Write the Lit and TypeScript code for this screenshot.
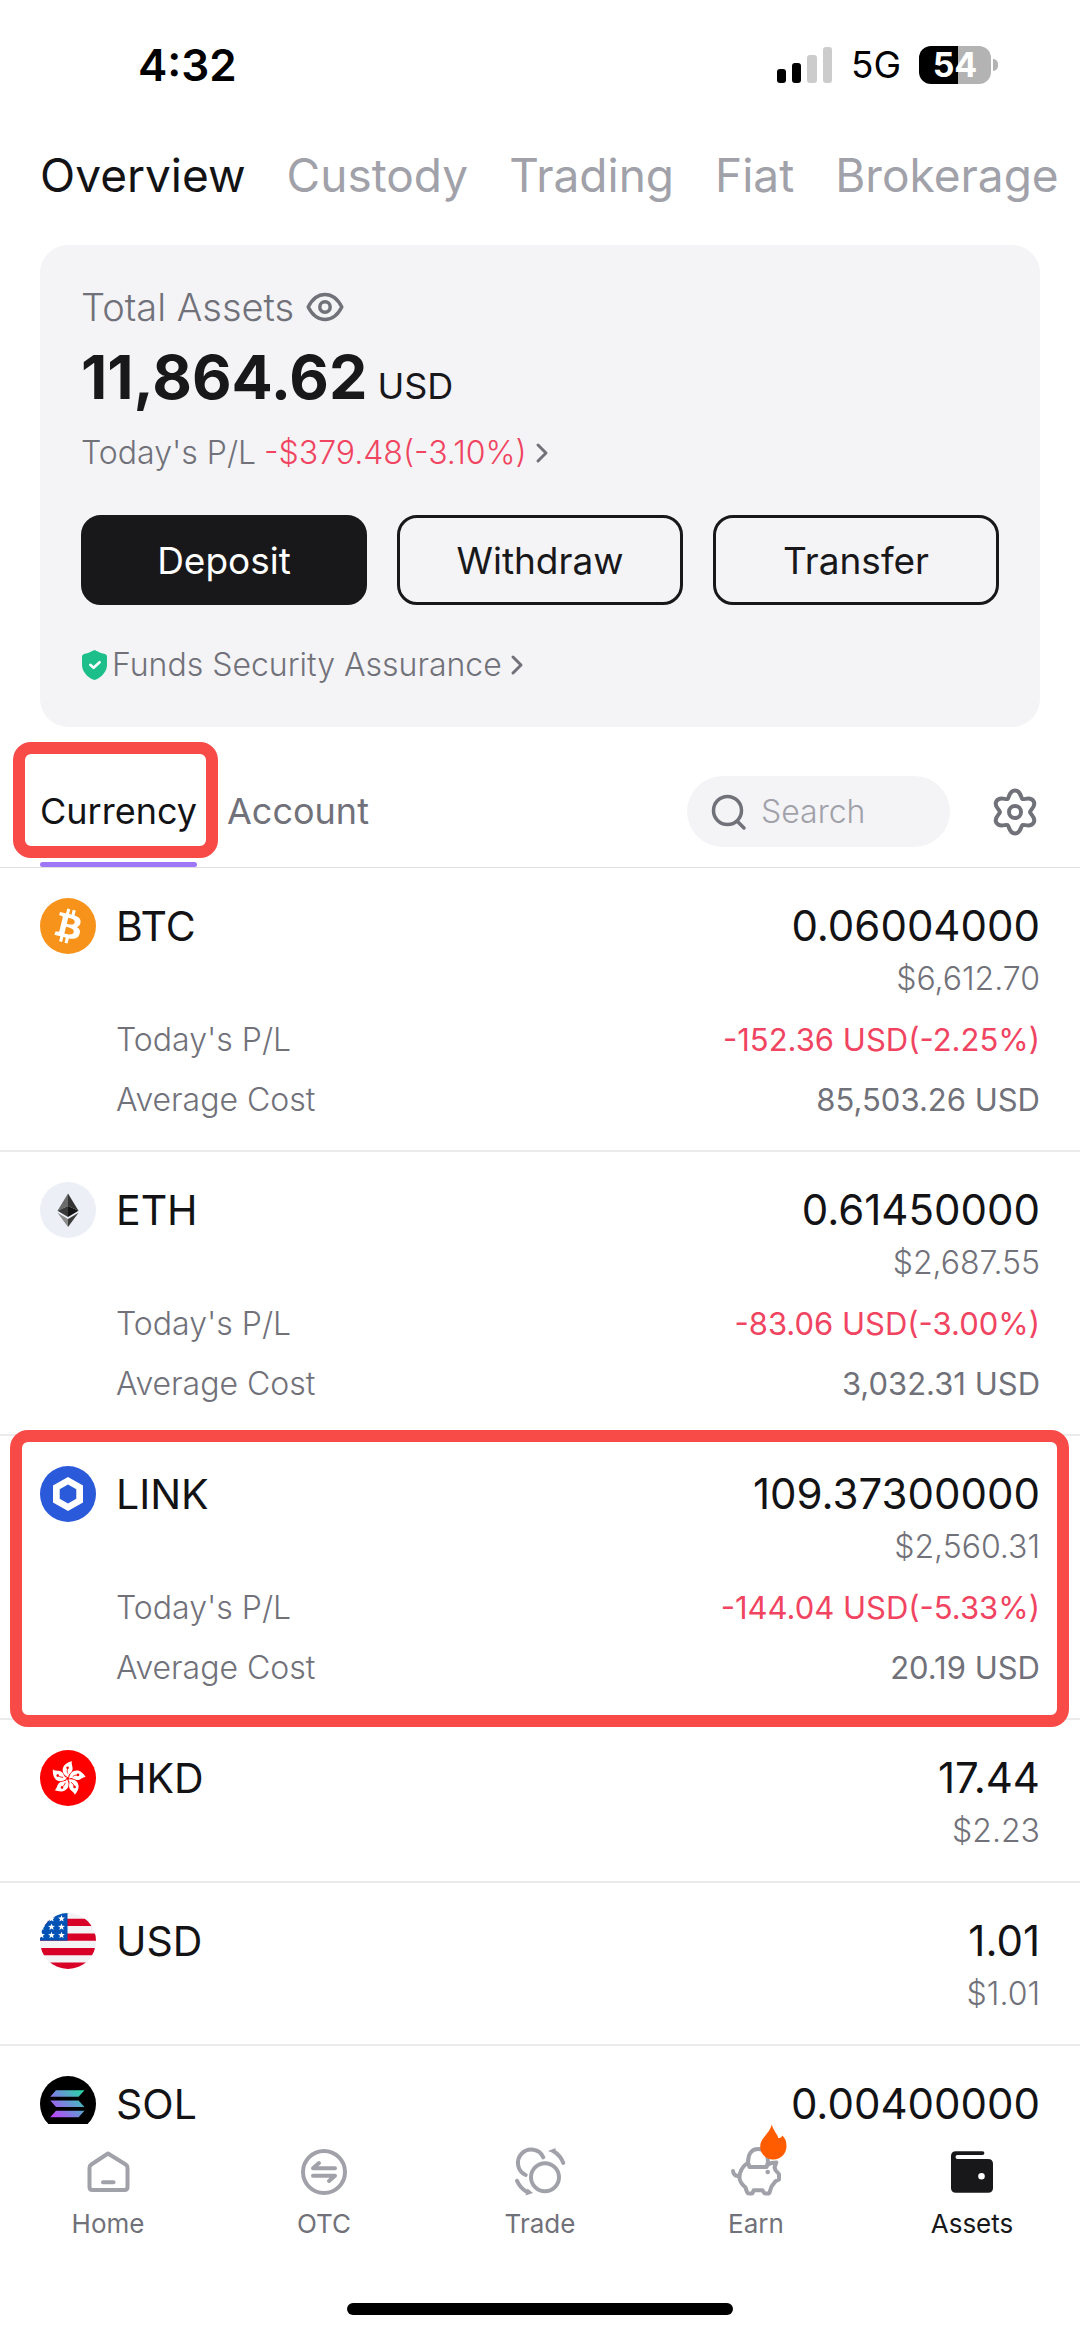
import { LitElement, html, css, svg, nothing, type TemplateResult } from "lit";
import { customElement, property, state } from "lit/decorators.js";
import { classMap } from "lit/directives/class-map.js";

interface Holding {
  code: string;
  amount: string;
  fiat?: string;
  profit?: string;
  cost?: string;
  marked?: boolean;
}

const HOLDINGS: Holding[] = [
  { code: "BTC", amount: "0.06004000", fiat: "$6,612.70", profit: "-152.36 USD(-2.25%)", cost: "85,503.26 USD" },
  { code: "ETH", amount: "0.61450000", fiat: "$2,687.55", profit: "-83.06 USD(-3.00%)", cost: "3,032.31 USD" },
  { code: "LINK", amount: "109.37300000", fiat: "$2,560.31", profit: "-144.04 USD(-5.33%)", cost: "20.19 USD", marked: true },
  { code: "HKD", amount: "17.44", fiat: "$2.23" },
  { code: "USD", amount: "1.01", fiat: "$1.01" },
  { code: "SOL", amount: "0.00400000" },
];

const SECTIONS = ["Overview", "Custody", "Trading", "Fiat", "Brokerage"];
const NAV = ["Home", "OTC", "Trade", "Earn", "Assets"];

const star = (cx: number, cy: number, r: number) =>
  Array.from({ length: 10 }, (_, i) => {
    const a = (Math.PI / 5) * i - Math.PI / 2;
    const d = i % 2 ? r * 0.42 : r;
    return `${(cx + d * Math.cos(a)).toFixed(2)},${(cy + d * Math.sin(a)).toFixed(2)}`;
  }).join(" ");

/* Six rounded lobes around the origin. */
const gearPath = () => {
  const at = (i: number) => {
    const a = (Math.PI / 6) * i - Math.PI / 2;
    const lobe = i % 2 === 0;
    const r = lobe ? 21.5 : 15;
    const h = lobe ? 6 : 2;
    const x = r * Math.cos(a);
    const y = r * Math.sin(a);
    const tx = -Math.sin(a) * h;
    const ty = Math.cos(a) * h;
    return { x, y, tx, ty };
  };
  const first = at(0);
  let d = `M${first.x.toFixed(2)} ${first.y.toFixed(2)}`;
  for (let i = 0; i < 12; i++) {
    const p = at(i);
    const q = at(i + 1);
    d += `C${(p.x + p.tx).toFixed(2)} ${(p.y + p.ty).toFixed(2)} ${(q.x - q.tx).toFixed(2)} ${(q.y - q.ty).toFixed(2)} ${q.x.toFixed(2)} ${q.y.toFixed(2)}`;
  }
  return d + "Z";
};

const COIN_ART: Record<string, TemplateResult> = {
  BTC: svg`<g transform="scale(1.75)"><circle cx="16" cy="16" r="16" fill="#f7931a"/><path fill="#fff" d="M23.189 14.02c.314-2.096-1.283-3.223-3.465-3.975l.708-2.84-1.728-.43-.69 2.765c-.454-.114-.92-.22-1.385-.326l.695-2.783L15.596 6l-.708 2.839c-.376-.086-.746-.17-1.104-.26l.002-.009-2.384-.595-.46 1.846s1.283.294 1.256.312c.7.175.826.638.805 1.006l-.806 3.235c.048.012.11.03.18.057l-.183-.045-1.13 4.532c-.086.212-.303.531-.793.41.018.025-1.256-.313-1.256-.313l-.858 1.978 2.25.561c.418.105.828.215 1.231.318l-.715 2.872 1.727.43.708-2.84c.472.127.93.245 1.378.357l-.706 2.828 1.728.43.715-2.866c2.948.558 5.164.333 6.097-2.333.752-2.146-.037-3.385-1.588-4.192 1.13-.26 1.98-1.003 2.207-2.538zm-3.95 5.538c-.533 2.147-4.148.986-5.32.695l.95-3.805c1.172.293 4.929.872 4.37 3.11zm.535-5.569c-.487 1.953-3.495.96-4.47.717l.86-3.45c.975.243 4.118.696 3.61 2.733z"/></g>`,
  ETH: svg`<circle cx="28" cy="28" r="28" fill="#ecf0f6"/>
    <path fill="#6b6b6b" d="M28 11.5V24l-10.5 4.8z"/><path fill="#343434" d="M28 11.5V24l10.5 4.8z"/>
    <path fill="#393939" d="M28 24v11l-10.500-6.200z"/><path fill="#141414" d="M28 24v11l10.500-6.200z"/>
    <path fill="#8c8c8c" d="M17.500 30.800L28 37v8z"/><path fill="#3c3c3b" d="M38.500 30.800L28 37v8z"/>`,
  LINK: svg`<circle cx="28" cy="28" r="28" fill="#2a5ada"/><path fill="#fff" fill-rule="evenodd" d="M28 11l15 8.500v17L28 45l-15-8.500v-17zM28 18.500l-8.300 4.700v9.600l8.300 4.700 8.300-4.700v-9.600z"/>`,
  HKD: svg`<circle cx="28" cy="28" r="28" fill="#fe0000"/>${[0, 72, 144, 216, 288].map(
    (a) => svg`<g transform="rotate(${a} 28 28.500)"><path fill="#fff" d="M28.600 27.500C20.500 24.500 20 14 32 11.300c-1.200 3 1.600 5.700.3 9.200-1.300 3.200-4.600 3.500-3.700 7z"/><path d="M27.800 23.500c-.8-1.500-.8-3-.2-4.600" fill="none" stroke="#fe0000" stroke-width="0.8"/><circle cx="27.600" cy="17.800" r="1.300" fill="#fe0000"/></g>`,
  )}`,
  USD: svg`<defs><clipPath id="disc"><circle cx="28" cy="28" r="28"/></clipPath></defs>
    <g clip-path="url(#disc)"><rect width="56" height="56" fill="#f3f3f5"/>
    <path fill="#d80027" d="M0 5.800h56v7.300H0zM0 20.400h56v7.300H0zM0 35h56v7.300H0zM0 49.600h56V56H0z"/>
    <rect width="27.500" height="27.600" fill="#0052b4"/></g>
    ${[[21.5, 5.700], [11.5, 5.700], [11.5, 14], [21.5, 14], [1.500, 14], [1.500, 22.300], [11.5, 22.300], [21.5, 22.300]].map(
      ([x, y]) => svg`<polygon fill="#fff" points=${star(x, y, 3.600)}/>`,
    )}`,
  SOL: svg`<defs><linearGradient id="sol" gradientUnits="userSpaceOnUse" x1="12" y1="43" x2="43" y2="12"><stop offset="0" stop-color="#c63cff"/><stop offset="0.5" stop-color="#6d8fd8"/><stop offset="1" stop-color="#1fe0a0"/></linearGradient></defs>
    <circle cx="28" cy="28" r="28" fill="#000"/><path fill="url(#sol)" d="M16 14.300h28.500L38.600 20.800H10.200zM10.200 24.600h28.400l5.900 6.500H16zM16 34.800h28.500l-5.900 6.500H10.200z"/>`,
};

const NAV_ART: Record<string, TemplateResult> = {
  Home: svg`<path d="M27 8.500L44.700 19.500Q46.500 20.700 46.500 23V42q0 3-3 3H11.500q-3 0-3-3V23q0-2.300 1.800-3.500z"/><path d="M22 37.300h10.500"/>`,
  OTC: svg`<circle cx="27" cy="27" r="21"/><path d="M38 23.200H16L22 18M16 30.800H38L32 36"/>`,
  Trade: svg`<circle cx="32" cy="32.300" r="14"/><path d="M30.300 12.300A13.300 13.300 0 1 0 12.700 30"/><path d="M41 6.500Q47.500 10.500 50.300 18M4 35.800Q7 43 14 47"/><path stroke="none" fill="currentColor" d="M35 6L42.500 3v6zM20 48L12.500 50.500 14.500 43.500z"/>`,
  Earn: svg`<path d="M19 17.500C13.500 21.500 10.500 27 10.500 32.500C10.500 37 13 39.500 16.500 42.500L18 47Q18.700 48.700 20.500 48.500H22Q23.500 48.500 24 47L24.700 45.300H33.500L34.500 47Q35.200 48.500 36.500 48.500H38.500Q40.200 48.500 40.700 47L42.500 41.500L46.500 36.300L50 34.500V29L46.700 25.500L45.500 22.500L47.300 17.500Q42 17.500 39 19.500"/><path d="M20.500 22H37.500L39 17.500C39 9.500 36 4 29 4C22.500 4 19 9 19 17.500z"/><path d="M4 26Q4.500 31 9.500 31"/><circle cx="38.700" cy="27" r="2.300" fill="currentColor" stroke="none"/><path stroke="none" fill="#ff5c00" d="M42.700-20.500C44.500-14 48.500-11 49.200-7Q52.500-6.500 53.200-9.500C56-7 57.500-4 57.500 1C57.500 9 51.500 14.500 44.500 14.500C37 14.500 31.200 9 31.200 1.500C31.200-7 40.500-11 42.700-20.500z"/>`,
  Assets: svg`<path stroke="none" fill="currentColor" fill-rule="evenodd" d="M11 6.200H37.500a1.800 1.800 0 0 1 0 3.800H12.500a2 2 0 0 0 0 4H43q5 0 5 5V43q0 4.700-5 4.700H11q-5 0-5-4.700V11q0-4.800 5-4.800zM36.500 28a3.300 3.300 0 1 0 0 6.600 3.300 3.300 0 0 0 0-6.600z"/>`,
};

const chevron = svg`<path d="M3 3l8 8-8 8" fill="none" stroke="currentColor" stroke-width="3" stroke-linecap="round" stroke-linejoin="round"/>`;

@customElement("holding-row")
class HoldingRow extends LitElement {
  @property({ attribute: false }) holding!: Holding;

  static styles = css`
    :host {
      display: block;
      position: relative;
      border-bottom: 2px solid #ebebed;
    }
    .row {
      display: grid;
      grid-template-columns: 56px 1fr auto;
      column-gap: 20px;
      align-items: center;
      padding: 30px 40px 20px;
    }
    .short {
      padding-bottom: 25px;
    }
    .coin {
      display: block;
      width: 56px;
      height: 56px;
    }
    .code,
    .amount {
      line-height: 56px;
      color: #131316;
    }
    .code {
      font-size: 41px;
    }
    .amount {
      font-size: 42px;
      text-align: right;
    }
    .fiat,
    .label,
    .value {
      color: #71717a;
    }
    .fiat,
    .label {
      font-size: 32px;
      font-weight: 300;
    }
    .fiat {
      grid-column: 2 / 4;
      line-height: 50px;
      text-align: right;
    }
    .details {
      grid-column: 2 / 4;
      margin: 6px 0 0;
      line-height: 60px;
    }
    .pair {
      display: flex;
      justify-content: space-between;
    }
    .value {
      margin: 0;
      font-size: 31px;
    }
    .loss {
      color: #f04461;
    }
    .mark {
      position: absolute;
      inset: -6px 11px -9px 10px;
      border: 12px solid #f84b47;
      border-radius: 18px;
      pointer-events: none;
      z-index: 1;
    }
  `;

  render() {
    const h = this.holding;
    return html`
      <div class=${classMap({ row: true, short: !h.profit })}>
        <svg class="coin" viewBox="0 0 56 56" aria-hidden="true">${COIN_ART[h.code]}</svg>
        <span class="code">${h.code}</span>
        <span class="amount">${h.amount}</span>
        ${h.fiat ? html`<span class="fiat">${h.fiat}</span>` : nothing}
        ${h.profit
          ? html`<dl class="details">
              <div class="pair"><dt class="label">Today's P/L</dt><dd class="value loss">${h.profit}</dd></div>
              <div class="pair"><dt class="label">Average Cost</dt><dd class="value">${h.cost}</dd></div>
            </dl>`
          : nothing}
      </div>
      ${h.marked ? html`<div class="mark"></div>` : nothing}
    `;
  }
}

@customElement("app-root")
class AppRoot extends LitElement {
  @state() private section = "Overview";
  @state() private view = "Currency";

  static styles = css`
    :host {
      display: flex;
      flex-direction: column;
      height: 100vh;
      overflow: hidden;
      background: #fff;
      color: #131316;
      font-family: Inter, "Liberation Sans", sans-serif;
    }
    * {
      box-sizing: border-box;
    }
    button {
      font: inherit;
      color: inherit;
      background: none;
      border: 0;
      padding: 0;
      margin: 0;
      cursor: pointer;
    }
    a {
      color: inherit;
      text-decoration: none;
    }
    svg {
      display: block;
      flex: none;
    }
    .status {
      display: flex;
      align-items: center;
      justify-content: space-between;
      padding: 40px 82px 40px 138px;
      line-height: 50px;
      color: #000;
    }
    .time {
      font-size: 44px;
      font-weight: 600;
    }
    .signals {
      display: flex;
      align-items: center;
    }
    .network {
      margin: 0 18px;
      font-size: 37px;
    }
    .battery {
      width: 72px;
      height: 38px;
      border-radius: 12px;
      background: linear-gradient(90deg, #000 54%, #b3b3b3 54%);
      color: #fff;
      font-size: 34px;
      font-weight: 700;
      line-height: 38px;
      text-align: center;
    }
    .knob {
      width: 5px;
      height: 12px;
      margin-left: 2px;
      border-radius: 0 6px 6px 0;
      background: #b3b3b3;
    }
    .sections {
      display: flex;
      gap: 41px;
      padding: 15px 20px 0 40px;
      font-size: 46px;
      line-height: 60px;
      white-space: nowrap;
      color: #a1a1aa;
    }
    .section.on {
      color: #131316;
    }
    .card {
      margin: 40px 40px 0;
      padding: 40px 41px 42px;
      border-radius: 28px;
      background: #f4f4f6;
      color: #71717a;
    }
    .total {
      display: flex;
      align-items: center;
      gap: 12px;
      font-size: 38px;
      font-weight: 300;
      line-height: 44px;
    }
    .balance {
      display: flex;
      align-items: baseline;
      gap: 10px;
      margin-top: 10px;
      color: #18181b;
    }
    .sum {
      font-size: 61px;
      font-weight: 700;
      line-height: 76px;
    }
    .unit {
      font-size: 36px;
      line-height: 44px;
    }
    .line {
      display: flex;
      align-items: center;
      width: fit-content;
      font-size: 32px;
      font-weight: 300;
      line-height: 40px;
    }
    .today {
      gap: 8px;
      margin-top: 18px;
    }
    .loss {
      color: #f04461;
    }
    .actions {
      display: grid;
      grid-template-columns: repeat(3, 1fr);
      gap: 30px;
      margin: 42px 0 40px;
    }
    .action {
      height: 90px;
      border: 3px solid #18181b;
      border-radius: 20px;
      font-size: 37px;
      color: #18181b;
    }
    .action.primary {
      background: #18181b;
      color: #fff;
    }
    .funds {
      gap: 4px;
    }
    .toolbar {
      display: flex;
      align-items: flex-start;
      gap: 30px;
      padding: 49px 40px 0;
      border-bottom: 1px solid #dfdfe2;
    }
    .view {
      position: relative;
      padding-bottom: 20px;
      font-size: 36px;
      line-height: 71px;
      color: #71717a;
    }
    .view.on {
      color: #131316;
    }
    .view.on::after {
      content: "";
      position: absolute;
      inset: auto 0 0 0;
      height: 5px;
      border-radius: 3px;
      background: #9e77f7;
    }
    .mark {
      position: absolute;
      inset: -34px -21px 9px -27px;
      border: 12px solid #f84b47;
      border-radius: 18px;
      pointer-events: none;
    }
    .search {
      display: flex;
      align-items: center;
      gap: 14px;
      width: 263px;
      height: 71px;
      margin-left: auto;
      padding: 0 24px;
      border-radius: 36px;
      background: #f4f4f6;
      color: #71717a;
    }
    .query {
      flex: 1;
      min-width: 0;
      padding: 0;
      border: 0;
      outline: 0;
      background: none;
      font: inherit;
      font-size: 32px;
      font-weight: 300;
      color: #131316;
    }
    .query::placeholder {
      color: #a1a1aa;
      opacity: 1;
    }
    .gear {
      height: 71px;
      margin-left: 10px;
      color: #71717a;
    }
    .list {
      flex: 1;
      min-height: 0;
      overflow: hidden auto;
      scrollbar-width: none;
      margin: 0;
      padding: 0;
      list-style: none;
    }
    .nav {
      position: relative;
      z-index: 2;
      display: grid;
      grid-template-columns: repeat(5, 1fr);
      padding-top: 21px;
      background: #fff;
      color: #71717a;
    }
    .tab {
      display: flex;
      flex-direction: column;
      align-items: center;
      gap: 8px;
      font-size: 26px;
      line-height: 34px;
    }
    .tab svg {
      overflow: visible;
      color: #a1a1aa;
    }
    .tab.on,
    .tab.on svg {
      color: #18181b;
    }
    .home-bar {
      align-self: center;
      width: 386px;
      height: 12px;
      margin: 62px 0 21px;
      border-radius: 6px;
      background: #000;
    }
  `;

  render() {
    return html`
      <header class="status">
        <span class="time">4:32</span>
        <div class="signals">
          <svg width="56" height="36" viewBox="0 0 56 36" aria-hidden="true">
            <rect y="22" width="9" height="14" rx="3" />
            <rect x="15" y="16" width="9" height="20" rx="3" />
            <rect x="30" y="8" width="10" height="28" rx="3" fill="#ccc" />
            <rect x="46" width="9" height="36" rx="3" fill="#ccc" />
          </svg>
          <span class="network">5G</span>
          <span class="battery">54</span>
          <span class="knob"></span>
        </div>
      </header>

      <nav class="sections" aria-label="Sections">
        ${SECTIONS.map(
          (s) => html`<button class=${classMap({ section: true, on: s === this.section })} @click=${() => (this.section = s)}>${s}</button>`,
        )}
      </nav>

      <section class="card">
        <div class="total">
          <span>Total Assets</span>
          <button aria-label="Hide balance">
            <svg width="38" height="30" viewBox="0 0 38 30" fill="none" stroke="currentColor" stroke-width="3.500" stroke-linejoin="round">
              <path d="M2.200 15C6 7.500 11.500 2.500 19 2.500S32 7.500 35.800 15C32 22.500 26.500 27.500 19 27.500S6 22.500 2.200 15z" />
              <circle cx="19" cy="15" r="5.200" />
            </svg>
          </button>
        </div>
        <div class="balance"><span class="sum">11,864.62</span><span class="unit">USD</span></div>
        <a class="line today" href="#today">
          <span>Today's P/L</span>
          <span class="loss">-$379.48(-3.10%)</span>
          <svg width="14" height="22" viewBox="0 0 14 22" aria-hidden="true">${chevron}</svg>
        </a>
        <div class="actions">
          <button class="action primary">Deposit</button>
          <button class="action">Withdraw</button>
          <button class="action">Transfer</button>
        </div>
        <a class="line funds" href="#funds">
          <svg width="27" height="32" viewBox="0 0 27 32" aria-hidden="true">
            <path fill="#1cbf8a" d="M13.500 1Q19 4 24 5Q26 5.500 26 7.500V16C26 22 21 28 15 30.500Q13.500 31.300 12 30.500C6 28 1 22 1 16V7.500Q1 5.500 3 5Q8 4 13.500 1z" />
            <path d="M9.300 15.800l3.300 3 6-5.600" fill="none" stroke="#fff" stroke-width="2.600" stroke-linecap="round" stroke-linejoin="round" />
          </svg>
          <span>Funds Security Assurance</span>
          <svg width="18" height="22" viewBox="-4 0 18 22" aria-hidden="true">${chevron}</svg>
        </a>
      </section>

      <div class="toolbar">
        ${["Currency", "Account"].map(
          (v) => html`<button class=${classMap({ view: true, on: v === this.view })} @click=${() => (this.view = v)}>
            ${v}${v === "Currency" ? html`<span class="mark"></span>` : nothing}
          </button>`,
        )}
        <label class="search">
          <svg width="36" height="38" viewBox="0 0 36 38" fill="none" stroke="currentColor" stroke-width="3.500" stroke-linecap="round" aria-hidden="true">
            <circle cx="16.500" cy="17.500" r="14" />
            <path d="M26.500 28.500l6.500 6.500" />
          </svg>
          <input class="query" type="search" placeholder="Search" aria-label="Search" />
        </label>
        <button class="gear" aria-label="Settings">
          <svg width="50" height="50" viewBox="-25 -25 50 50" fill="none" stroke="currentColor" stroke-width="4" stroke-linejoin="round">
            <path d=${gearPath()} />
            <circle r="6" />
          </svg>
        </button>
      </div>

      <ul class="list">
        ${HOLDINGS.map((h) => html`<li><holding-row .holding=${h}></holding-row></li>`)}
      </ul>

      <nav class="nav" aria-label="Main">
        ${NAV.map(
          (n) => html`<a class=${classMap({ tab: true, on: n === "Assets" })} href="#${n.toLowerCase()}">
            <svg width="54" height="54" viewBox="0 0 54 54" fill="none" stroke="currentColor" stroke-width="4" stroke-linecap="round" stroke-linejoin="round" aria-hidden="true">${NAV_ART[n]}</svg>
            <span>${n}</span>
          </a>`,
        )}
      </nav>
      <div class="home-bar"></div>
    `;
  }
}
